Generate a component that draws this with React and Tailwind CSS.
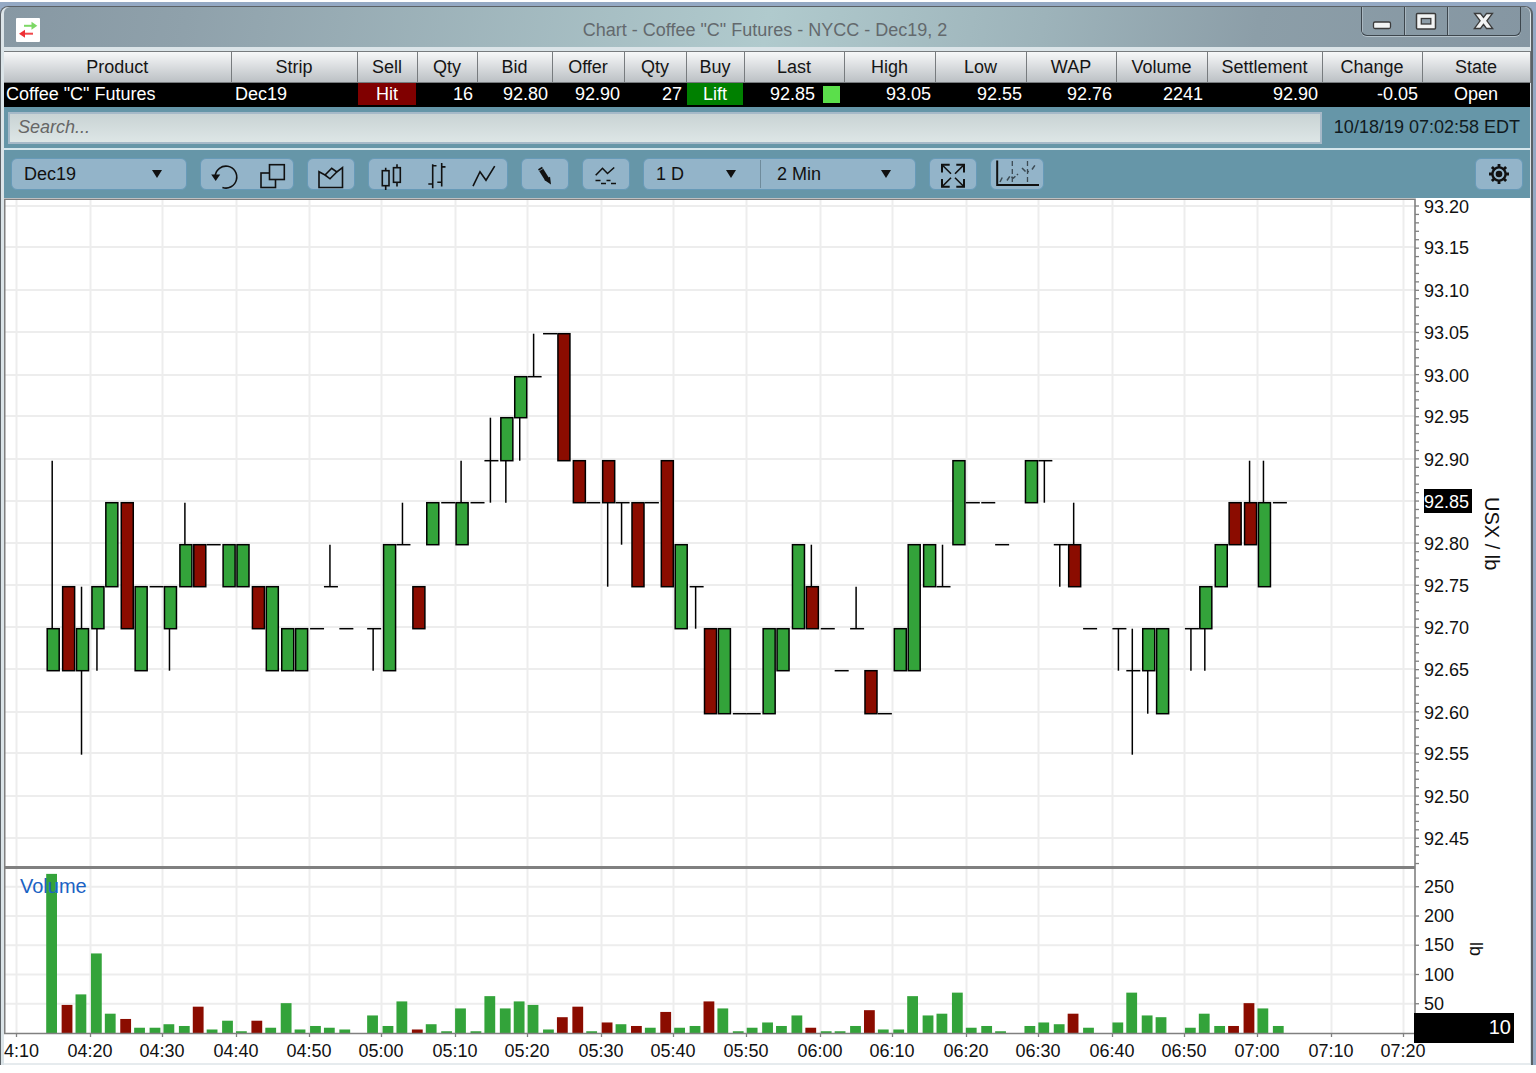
import clsx from 'clsx'

const GREEN = '#33a33a'
const RED = '#8b0c00'

const COLUMNS = [
  { label: 'Product', value: 'Coffee "C" Futures', width: 'w-[227px]', align: 'text-left' },
  { label: 'Strip', value: 'Dec19', width: 'w-[126px]', align: 'text-left' },
  { label: 'Sell', value: 'Hit', width: 'w-[60px]', action: 'bg-[#800000]' },
  { label: 'Qty', value: '16', width: 'w-[60px]' },
  { label: 'Bid', value: '92.80', width: 'w-[75px]' },
  { label: 'Offer', value: '92.90', width: 'w-[72px]' },
  { label: 'Qty', value: '27', width: 'w-[62px]' },
  { label: 'Buy', value: 'Lift', width: 'w-[58px]', action: 'bg-[#008000]' },
  { label: 'Last', value: '92.85', width: 'w-[100px]', tick: true },
  { label: 'High', value: '93.05', width: 'w-[91px]' },
  { label: 'Low', value: '92.55', width: 'w-[91px]' },
  { label: 'WAP', value: '92.76', width: 'w-[90px]' },
  { label: 'Volume', value: '2241', width: 'w-[91px]' },
  { label: 'Settlement', value: '92.90', width: 'w-[115px]' },
  { label: 'Change', value: '-0.05', width: 'w-[100px]' },
  { label: 'State', value: 'Open', width: 'w-[108px]', align: 'text-center' },
]

// y of each 0.05 price level, from 93.20 down to 92.45
const LEVELS = [206, 247, 290, 332, 375, 416, 459, 501, 543, 585, 627, 669, 712, 753, 796, 838]

// x of each 10 minute line, from 04:10 to 07:20
const TIME_X = [16, 90, 162, 236, 309, 381, 455, 527, 601, 673, 746, 820, 892, 966, 1038, 1112, 1184, 1257, 1331, 1403]

// [slot, body top, body bottom, high, low, volume, red], prices in cents above 92.00
const BARS = [
  [0, 70, 65, 90, 65, 272],
  [1, 75, 65, 75, 65, 48, 1],
  [2, 70, 65, 75, 55, 66],
  [3, 75, 70, 75, 65, 136],
  [4, 85, 75, 85, 75, 33],
  [5, 85, 70, 85, 70, 24, 1],
  [6, 75, 65, 75, 65, 9],
  [7, 75, 75, 75, 75, 9],
  [8, 75, 70, 75, 65, 15],
  [9, 80, 75, 85, 75, 12],
  [10, 80, 75, 80, 75, 45, 1],
  [11, 80, 80, 80, 80, 6],
  [12, 80, 75, 80, 75, 21],
  [13, 80, 75, 80, 75, 3],
  [14, 75, 70, 75, 70, 21, 1],
  [15, 75, 65, 75, 65, 9],
  [16, 70, 65, 70, 65, 51],
  [17, 70, 65, 70, 65, 6],
  [18, 70, 70, 70, 70, 12],
  [19, 75, 75, 80, 75, 9],
  [20, 70, 70, 70, 70, 6],
  [22, 70, 70, 70, 65, 30],
  [23, 80, 65, 80, 65, 12],
  [24, 80, 80, 85, 80, 54],
  [25, 75, 70, 75, 70, 6, 1],
  [26, 85, 80, 85, 80, 15],
  [27, 85, 85, 85, 85, 3],
  [28, 85, 80, 90, 80, 42],
  [29, 85, 85, 85, 85, 3],
  [30, 90, 90, 95, 85, 63],
  [31, 95, 90, 95, 85, 42],
  [32, 100, 95, 100, 90, 54],
  [33, 100, 100, 105, 100, 48],
  [34, 105, 105, 105, 105, 6],
  [35, 105, 90, 105, 90, 27, 1],
  [36, 90, 85, 90, 85, 45, 1],
  [37, 85, 85, 85, 85, 3],
  [38, 90, 85, 90, 75, 18, 1],
  [39, 85, 85, 85, 80, 15],
  [40, 85, 75, 85, 75, 12, 1],
  [41, 85, 85, 85, 85, 9],
  [42, 90, 75, 90, 75, 36, 1],
  [43, 80, 70, 80, 70, 9],
  [44, 75, 75, 75, 70, 12],
  [45, 70, 60, 70, 60, 54, 1],
  [46, 70, 60, 70, 60, 42],
  [47, 60, 60, 60, 60, 3],
  [48, 60, 60, 60, 60, 9],
  [49, 70, 60, 70, 60, 18],
  [50, 70, 65, 70, 65, 12],
  [51, 80, 70, 80, 70, 30],
  [52, 75, 70, 80, 70, 9, 1],
  [53, 70, 70, 70, 70, 3],
  [54, 65, 65, 65, 65, 3],
  [55, 70, 70, 75, 70, 12],
  [56, 65, 60, 65, 60, 39, 1],
  [57, 60, 60, 60, 60, 6],
  [58, 70, 65, 70, 65, 6],
  [59, 80, 65, 80, 65, 63],
  [60, 80, 75, 80, 75, 30],
  [61, 75, 75, 80, 75, 33],
  [62, 90, 80, 90, 80, 69],
  [63, 85, 85, 85, 85, 9],
  [64, 85, 85, 85, 85, 12],
  [65, 80, 80, 80, 80, 3],
  [67, 90, 85, 90, 85, 12],
  [68, 90, 90, 90, 85, 18],
  [69, 80, 80, 80, 75, 15],
  [70, 80, 75, 85, 75, 33, 1],
  [71, 70, 70, 70, 70, 9],
  [73, 70, 70, 70, 65, 18],
  [74, 65, 65, 70, 55, 69],
  [75, 70, 65, 70, 60, 30],
  [76, 70, 60, 70, 60, 27],
  [78, 70, 70, 70, 65, 9],
  [79, 75, 70, 75, 65, 33],
  [80, 80, 75, 80, 75, 12],
  [81, 85, 80, 85, 80, 12, 1],
  [82, 85, 80, 90, 80, 51, 1],
  [83, 85, 75, 90, 75, 42],
  [84, 85, 85, 85, 85, 12],
]

const slotX = i => 53.2 + 1.543 * Math.round(9.456 * i + 0.45)
const priceY = p => LEVELS[(120 - p) / 5] + 1.7
const volumeY = v => 1033 - v * 0.585

function timeLabel(i) {
  const minutes = 250 + i * 10
  return `0${Math.floor(minutes / 60)}:${String(minutes % 60).padStart(2, '0')}`
}

function Icon({ children, width = 28 }) {
  return (
    <svg
      width={width}
      height="28"
      viewBox={`0 0 ${width} 28`}
      fill="none"
      stroke="#111"
      strokeWidth="1.6"
      className="mt-1 shrink-0 overflow-visible"
      aria-hidden="true"
    >
      {children}
    </svg>
  )
}

const UndoIcon = () => (
  <Icon>
    <path d="M5.2 14A10.8 11 0 1 1 12.4 25.5" />
    <path d="M1.2 12.5h9L5.7 19z" fill="#111" stroke="none" />
  </Icon>
)

const CascadeIcon = () => (
  <Icon>
    <rect x="5" y="11" width="14.5" height="14.5" />
    <rect x="13.5" y="2.7" width="14.8" height="14.8" fill="#93b4c9" />
  </Icon>
)

const AreaIcon = () => (
  <Icon>
    <path d="M2 9.7 8 13 14.7 6.3 19.8 10 25.5 5.7V25.5H2z" />
    <path d="M8 13 13 16.8 19.8 10" />
  </Icon>
)

const CandleIcon = () => (
  <Icon>
    <path d="M7.7 5.7v3M7.7 23.7V28M19 2.3v3.4M19 20.3V24.5" />
    <rect x="4.3" y="8.7" width="6.7" height="15" />
    <rect x="15.5" y="5.7" width="6.8" height="14.6" />
  </Icon>
)

const OhlcIcon = () => (
  <Icon>
    <path d="M8.7 2.3v24M4.3 22h4.4M8.7 3.7h3.8M17.7 1v23.5M13.3 20.3h4.4M17.7 4.9h3.8" />
  </Icon>
)

const LineIcon = () => (
  <Icon>
    <path d="M3 24.2 10 9.7 16 18.2 24.7 4.2" />
  </Icon>
)

const PencilIcon = () => (
  <Icon>
    <path d="M9 6 16.2 17.5" strokeWidth="4.6" />
    <path d="M13.4 18 19 14.8 20 22.5z" fill="#111" stroke="none" />
    <path d="M8 9 12 6.5" stroke="#93b4c9" strokeWidth="0.7" />
  </Icon>
)

const IndicatorIcon = () => (
  <Icon>
    <path d="M3.7 13.3 10.5 6.3 15.5 11.5 22.2 5.5" />
    <path d="M3.5 18.5h5M9 21.5h5M14.5 18.5h4M19 21.5h5" />
  </Icon>
)

const ExpandIcon = () => (
  <Icon>
    <path d="M3 10.5V2.8h7.7M17.3 2.8H25v7.7M25 17v7.7h-7.7M10.7 24.7H3V17" strokeWidth="2" />
    <path d="M3 2.8 12 11.8M25 2.8 16 11.8M25 24.7 16 15.7M3 24.7 12 15.7" />
  </Icon>
)

const StudyIcon = () => (
  <Icon width={46}>
    <path d="M3.2-1.5v24.5H45" strokeWidth="2" />
    <path d="M18.3-1v24M33.5-1v24" stroke="#3c4a53" strokeWidth="1.3" strokeDasharray="5 3" />
    <path d="M6 20 9 14M13 18.5 16 14 19.5 16 24 12M28 6 32 10 35 9.5M38 7.5 41.5 2.5" stroke="#3c4a53" strokeWidth="1.5" strokeDasharray="5 2" />
  </Icon>
)

const GearIcon = () => (
  <Icon>
    <path
      d="M14 2v4M14 18v4M4 12h4M20 12h4M6.9 4.9 9.7 7.7M18.3 16.3 21.1 19.1M6.9 19.1 9.7 16.3M18.3 7.7 21.1 4.9"
      strokeWidth="2.8"
    />
    <circle cx="14" cy="12" r="6.6" strokeWidth="2.4" />
    <circle cx="14" cy="12" r="3.3" fill="#111" stroke="none" />
  </Icon>
)

function ToolGroup({ children, className }) {
  return (
    <div className={clsx('flex h-8 items-center rounded-md border border-[#679ab8] bg-[#93b4c9]', className)}>
      {children}
    </div>
  )
}

function ToolButton({ label, icon: ToolIcon, wide }) {
  return (
    <button type="button" aria-label={label} className={clsx('flex h-full items-center justify-center', wide ? 'w-[52px]' : 'w-[46px]')}>
      <ToolIcon />
    </button>
  )
}

function ToolSelect({ label, value, className }) {
  return (
    <div className={clsx('relative flex h-full items-center', className)}>
      <select aria-label={label} defaultValue={value} className="h-full w-full appearance-none bg-transparent text-[18px] text-[#111] outline-none">
        <option>{value}</option>
      </select>
      <svg width="10" height="8" viewBox="0 0 10 8" className="pointer-events-none absolute right-6" aria-hidden="true">
        <path d="M0 0h10L5 8z" fill="#111" />
      </svg>
    </div>
  )
}

function TitleBar() {
  return (
    <header className="relative flex h-10 items-center rounded-t-md bg-[linear-gradient(100deg,#8798a3_0%,#8fa1ab_12%,#b0cacd_50%,#9db3ba_68%,#8c9ea8_82%,#8596a2_100%)] pt-1.5 pl-3">
      <svg width="24" height="24" viewBox="0 0 24 24" aria-hidden="true">
        <rect width="24" height="24" rx="1" fill="#fff" />
        <path d="M8 7.8h8" stroke="#7cd865" strokeWidth="2" />
        <path d="M15.5 3.8 21.3 7.8 15.5 11.8z" fill="#7cd865" />
        <path d="M9 15.7h8" stroke="#f0484c" strokeWidth="2" />
        <path d="M9 11.7 3 15.7 9 19.7z" fill="#ee2f35" />
      </svg>
      <h1 className="flex-1 pr-10 text-center text-[18px] leading-6 font-normal text-[#63696d]">Chart - Coffee "C" Futures - NYCC - Dec19, 2</h1>
      <div className="absolute top-0 right-[9px] flex h-[29px] overflow-hidden rounded-b-md border border-t-0 border-[#3d464d] shadow-[0_1px_0_#b4c2ca]">
        <button type="button" aria-label="Minimize" className="w-[43px] border-r border-[#3d464d] shadow-[inset_1px_0_0_#a9b7c0]">
          <svg width="42" height="28" viewBox="0 0 42 28" aria-hidden="true">
            <rect x="11.5" y="15" width="17" height="6.5" rx="1.5" fill="#f2f4f4" stroke="#3b3b3b" strokeWidth="1.3" />
          </svg>
        </button>
        <button type="button" aria-label="Maximize" className="w-[43px] border-r border-[#3d464d] shadow-[inset_1px_0_0_#a9b7c0]">
          <svg width="42" height="28" viewBox="0 0 42 28" aria-hidden="true">
            <rect x="11.5" y="6.5" width="19" height="15.5" rx="1" fill="#f2f4f4" stroke="#3b3b3b" strokeWidth="1.5" />
            <rect x="16.3" y="11.5" width="9.5" height="5.5" fill="#8d9da8" stroke="#3b3b3b" strokeWidth="1.3" />
          </svg>
        </button>
        <button type="button" aria-label="Close" className="w-[72px] shadow-[inset_1px_0_0_#a9b7c0]">
          <svg width="71" height="28" viewBox="0 0 71 28" aria-hidden="true">
            <path
              d="M26.5 6.5h6l3 4 3-4h6l-5.6 7.3 5.8 7.7h-6.2l-3-4.2-3 4.2h-6.2l5.8-7.7z"
              fill="#f2f4f4"
              stroke="#3b3b3b"
              strokeWidth="1.3"
            />
          </svg>
        </button>
      </div>
    </header>
  )
}

function QuoteTable() {
  return (
    <table className="w-full table-fixed border-collapse text-[18px] leading-[22px] whitespace-nowrap">
      <thead>
        <tr className="h-[31px] bg-linear-to-b from-[#f7f8f9] to-[#babfc3] text-[#151515]">
          {COLUMNS.map((col, i) => (
            <th key={i} scope="col" className={clsx('border border-[#777b7e] p-0 font-normal first:border-l-0', col.width)}>
              {col.label}
            </th>
          ))}
        </tr>
      </thead>
      <tbody>
        <tr className="h-6 bg-black text-white">
          {COLUMNS.map((col, i) => (
            <td key={i} className={clsx('pt-0 pb-0.5', col.action ? 'px-px text-center' : 'px-1', !col.action && (col.align ?? 'text-right'), i === 0 && 'pl-0.5')}>
              {col.action ? (
                <button type="button" className={clsx('block h-[22px] w-full', col.action)}>{col.value}</button>
              ) : col.tick ? (
                <span className="flex items-center justify-end gap-2">
                  {col.value}
                  <span className="size-[17px] bg-[#5bdf4b]" />
                </span>
              ) : (
                col.value
              )}
            </td>
          ))}
        </tr>
      </tbody>
    </table>
  )
}

function SearchBar() {
  return (
    <div className="flex h-[43px] items-center border-b-2 border-[#d5e6ec] bg-[#6696a8] pl-1">
      <input
        type="search"
        aria-label="Search"
        placeholder="Search..."
        className="h-8 min-w-0 flex-1 border-2 border-[#a6b9c8] bg-linear-to-b from-[#c9d3d4] to-[#dde6e6] px-2 text-[18px] italic outline-none placeholder:text-[#666]"
      />
      <time className="pr-[10px] pl-3 text-[18px] whitespace-nowrap text-[#101a1e]">10/18/19 07:02:58 EDT</time>
    </div>
  )
}

function Toolbar() {
  return (
    <div className="flex h-12 items-center gap-[13px] bg-[#6696a8] px-[7px]">
      <ToolGroup className="w-[176px] pl-3">
        <ToolSelect label="Strip" value="Dec19" className="w-full" />
      </ToolGroup>
      <ToolGroup>
        <ToolButton label="Reset" icon={UndoIcon} />
        <ToolButton label="Duplicate window" icon={CascadeIcon} />
      </ToolGroup>
      <ToolGroup>
        <ToolButton label="Area chart" icon={AreaIcon} />
      </ToolGroup>
      <ToolGroup>
        <ToolButton label="Candlesticks" icon={CandleIcon} />
        <ToolButton label="OHLC bars" icon={OhlcIcon} />
        <ToolButton label="Line" icon={LineIcon} />
      </ToolGroup>
      <ToolGroup>
        <ToolButton label="Draw" icon={PencilIcon} />
      </ToolGroup>
      <ToolGroup>
        <ToolButton label="Indicators" icon={IndicatorIcon} />
      </ToolGroup>
      <ToolGroup>
        <ToolSelect label="Range" value="1 D" className="w-[116px] pl-3" />
        <span className="h-7 w-px bg-[#6f8b9b]" />
        <ToolSelect label="Interval" value="2 Min" className="w-[154px] pl-4" />
      </ToolGroup>
      <ToolGroup>
        <ToolButton label="Fit to window" icon={ExpandIcon} />
      </ToolGroup>
      <ToolGroup>
        <ToolButton label="Studies" icon={StudyIcon} wide />
      </ToolGroup>
      <ToolGroup className="ml-auto">
        <ToolButton label="Settings" icon={GearIcon} />
      </ToolGroup>
    </div>
  )
}

function Chart() {
  const minorTicks = Array.from({ length: 79 }, (_, i) => 206 + i * 8.43)
  return (
    <svg viewBox="4 198 1526 865" className="block h-auto w-full bg-white text-[18px]" role="img" aria-label="Dec19 price and volume">
      <g stroke="#ededed" strokeWidth="2">
        {TIME_X.map(x => <path key={x} d={`M${x + 0.5} 199V1033`} />)}
        {LEVELS.map(y => <path key={y} d={`M5 ${y}H1415`} />)}
        {[250, 200, 150, 100, 50].map(v => <path key={v} d={`M5 ${volumeY(v)}H1415`} />)}
      </g>

      {BARS.map(([i, top, bottom, high, low, volume, red]) => {
        const x = slotX(i)
        return (
          <g key={i} stroke="#000">
            {high > top && <path d={`M${x - 1} ${priceY(high)}V${priceY(top)}`} strokeWidth="1.5" />}
            {low < bottom && <path d={`M${x - 1} ${priceY(bottom)}V${priceY(low)}`} strokeWidth="1.5" />}
            {top === bottom ? (
              <path d={`M${x - 7} ${priceY(top)}h14`} strokeWidth="1.5" />
            ) : (
              <rect x={x - 6} y={priceY(top)} width="12" height={priceY(bottom) - priceY(top)} fill={red ? RED : GREEN} strokeWidth="1.5" />
            )}
            <rect x={x - 7} y={volumeY(volume)} width="10.8" height={1033 - volumeY(volume)} fill={red ? RED : GREEN} stroke="none" />
          </g>
        )
      })}

      <path d="M4 867.5H1415" stroke="#808080" strokeWidth="3" />
      <path d="M4.7 1033V199.2H1415V1033.5H4" fill="none" stroke="#808080" strokeWidth="1.6" />
      <g stroke="#808080" strokeWidth="1.3">
        {minorTicks.map(y => <path key={y} d={`M1415 ${y}h4`} />)}
        {[250, 200, 150, 100, 50].map(v => <path key={v} d={`M1415 ${volumeY(v)}h4`} />)}
        {TIME_X.map(x => <path key={x} d={`M${x + 0.5} 1033v4`} />)}
      </g>

      <rect x="1424" y="489" width="48" height="24" fill="#000" />
      {LEVELS.map((y, i) => (
        <text key={y} x="1424" y={y + 7} fill={i === 7 ? '#fff' : '#111'}>{((9320 - i * 5) / 100).toFixed(2)}</text>
      ))}
      {[250, 200, 150, 100, 50].map(v => (
        <text key={v} x="1424" y={volumeY(v) + 6} fill="#111">{v}</text>
      ))}
      <text x="39" y="1057" textAnchor="end" fill="#111">{timeLabel(0).slice(1)}</text>
      {TIME_X.slice(1).map((x, i) => (
        <text key={x} x={x} y="1057" textAnchor="middle" fill="#111">{timeLabel(i + 1)}</text>
      ))}
      <rect x="1414" y="1013" width="100" height="30" fill="#000" />
      <text x="1511" y="1034" textAnchor="end" fill="#fff" className="text-[20px]">10</text>
      <text x="20" y="893" fill="#1a62c4" className="text-[20px]">Volume</text>
      <text transform="translate(1485 497) rotate(90)" fill="#111" className="text-[20px]">USX / lb</text>
      <text transform="translate(1470 942) rotate(90)" fill="#111">lb</text>
    </svg>
  )
}

export default function App() {
  return (
    <div className="min-h-screen bg-white pt-0.5 font-['Liberation_Sans',Arial,sans-serif]">
      <div className="bg-[#94a9c4] pt-1 pr-[3px]">
        <main className="rounded-t-lg border-t border-r-2 border-l border-[#5b6166] bg-[#dbe4e8] pr-px pl-[3px]">
          <TitleBar />
          <div className="mt-1 border-b-2 border-[#e6ebee]">
            <QuoteTable />
            <SearchBar />
            <Toolbar />
            <Chart />
          </div>
        </main>
      </div>
    </div>
  )
}
